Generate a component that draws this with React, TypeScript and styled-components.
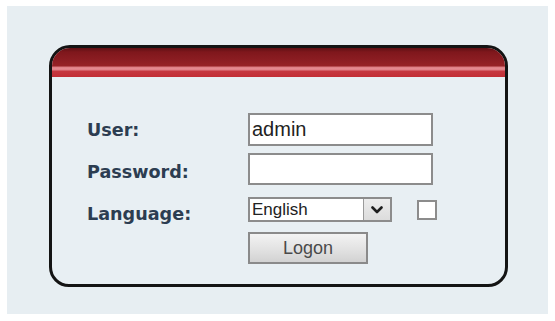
import React from "react";
import styled, { createGlobalStyle } from "styled-components";

const Global = createGlobalStyle`
  html, body { margin: 0; padding: 0; background: #ffffff; }
  * { box-sizing: border-box; }
`;

const Panel = styled.div`
  margin: 6px 7px 0 7px;
  width: 541px;
  height: 308px;
  background: #e7eef2;
  padding: 39px 0 0 42px;
`;

const Card = styled.div`
  width: 459px;
  height: 242px;
  border: 3px solid #141414;
  border-radius: 21px 21px 20px 20px;
  overflow: hidden;
  background: #e8eff3;
  display: flex;
  flex-direction: column;
`;

const Header = styled.div`
  height: 29px;
  flex: none;
  background: linear-gradient(
    to bottom,
    #5e1014 0px,
    #7f171c 4px,
    #8c1d22 12px,
    #972226 18px,
    #d9767c 19px,
    #e58c92 20px,
    #e07f86 22px,
    #c63840 23px,
    #c22e35 29px
  );
`;

const Body = styled.div`
  display: flex;
  padding-left: 35px;
`;

const LabelColumn = styled.div`
  width: 161px;
  padding-top: 32px;
  display: flex;
  flex-direction: column;
`;

const Label = styled.div`
  font-family: "DejaVu Sans", Verdana, sans-serif;
  font-weight: bold;
  font-size: 17.6px;
  line-height: 42px;
  color: #2c3d51;
`;

const ControlColumn = styled.div`
  padding-top: 36px;
  display: flex;
  flex-direction: column;
  align-items: flex-start;
`;

const TextInput = styled.input<{ $h: number; $mt?: number }>`
  width: 185px;
  height: ${(p) => p.$h}px;
  margin-top: ${(p) => p.$mt ?? 0}px;
  border: 2px solid #8c8c8c;
  background: #ffffff;
  padding: 0 0 0 2px;
  font-family: "Liberation Sans", Arial, sans-serif;
  font-size: 20px;
  color: #222;
  outline: none;
`;

const SelectRow = styled.div`
  display: flex;
  align-items: center;
  margin-top: 12px;
  height: 25px;
`;

const SelectBox = styled.div`
  width: 144px;
  height: 25px;
  border: 2px solid #8c8c8c;
  background: #ffffff;
  display: flex;
  align-items: stretch;
`;

const SelectText = styled.div`
  flex: 1;
  font-family: "Liberation Sans", Arial, sans-serif;
  font-size: 17px;
  line-height: 21px;
  color: #222;
  padding-left: 2px;
`;

const DropButton = styled.div`
  width: 27px;
  background: linear-gradient(to bottom, #ececec, #dcdcdc);
  border-left: 1px solid #9a9a9a;
  display: flex;
  align-items: center;
  justify-content: center;
`;

const Check = styled.div`
  width: 20px;
  height: 20px;
  margin-left: 25px;
  border: 2px solid #8c8c8c;
  background: #ffffff;
`;

const LogonButton = styled.button`
  margin-top: 10px;
  width: 120px;
  height: 32px;
  border: 2px solid #8a8a8a;
  background: linear-gradient(to bottom, #f3f3f3 0%, #e2e2e2 55%, #d2d2d2 100%);
  font-family: "Liberation Sans", Arial, sans-serif;
  font-size: 18px;
  color: #4a4a4a;
  padding: 0;
  cursor: pointer;
`;

export default function App() {
  return (
    <>
      <Global />
      <Panel>
        <Card>
          <Header />
          <Body>
            <LabelColumn>
              <Label>User:</Label>
              <Label>Password:</Label>
              <Label>Language:</Label>
            </LabelColumn>
            <ControlColumn>
              <TextInput $h={33} defaultValue="admin" />
              <TextInput $h={32} $mt={7} type="password" />
              <SelectRow>
                <SelectBox>
                  <SelectText>English</SelectText>
                  <DropButton>
                    <svg width="12" height="8" viewBox="0 0 12 8">
                      <path d="M1.5 1.5 L6 6 L10.5 1.5" fill="none" stroke="#1e1e1e" strokeWidth="2.6" strokeLinecap="round" strokeLinejoin="round" />
                    </svg>
                  </DropButton>
                </SelectBox>
                <Check />
              </SelectRow>
              <LogonButton>Logon</LogonButton>
            </ControlColumn>
          </Body>
        </Card>
      </Panel>
    </>
  );
}
